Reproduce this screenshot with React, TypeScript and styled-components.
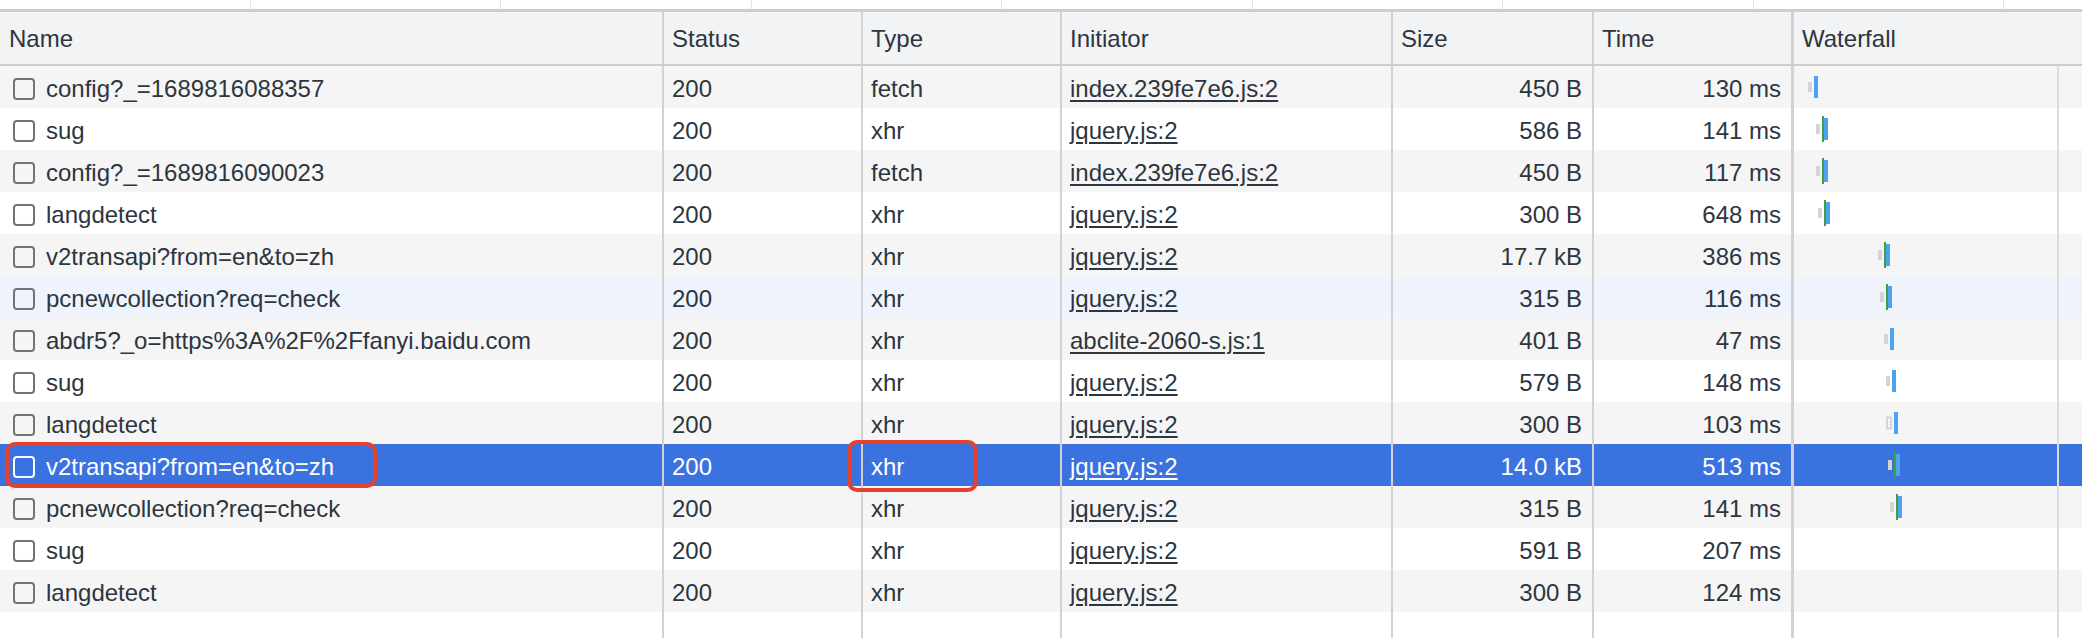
import styled, { createGlobalStyle, css } from "styled-components";

const GlobalStyle = createGlobalStyle`
  html, body {
    margin: 0;
    padding: 0;
    background: #ffffff;
  }
  body {
    font-family: "Liberation Sans", Arial, Helvetica, sans-serif;
    color: #2d3540;
  }
`;

const COLUMNS = "662px 199px 199px 331px 201px 199px 1fr";
const DIVIDER = "#d2d2d4";

type Tone = "odd" | "even" | "hover" | "selected";

type Bars = {
  gray?: number;
  hollow?: number;
  green?: number;
  blue: number;
};

type Request = {
  name: string;
  type: string;
  initiator: string;
  size: string;
  time: string;
  bars?: Bars;
  hover?: boolean;
  selected?: boolean;
};

const requests: Request[] = [
  { name: "config?_=1689816088357", type: "fetch", initiator: "index.239fe7e6.js:2", size: "450 B", time: "130 ms", bars: { gray: 14, blue: 20 } },
  { name: "sug", type: "xhr", initiator: "jquery.js:2", size: "586 B", time: "141 ms", bars: { gray: 22, green: 28, blue: 30 } },
  { name: "config?_=1689816090023", type: "fetch", initiator: "index.239fe7e6.js:2", size: "450 B", time: "117 ms", bars: { gray: 22, green: 28, blue: 30 } },
  { name: "langdetect", type: "xhr", initiator: "jquery.js:2", size: "300 B", time: "648 ms", bars: { gray: 24, green: 30, blue: 32 } },
  { name: "v2transapi?from=en&to=zh", type: "xhr", initiator: "jquery.js:2", size: "17.7 kB", time: "386 ms", bars: { gray: 84, green: 90, blue: 92 } },
  { name: "pcnewcollection?req=check", type: "xhr", initiator: "jquery.js:2", size: "315 B", time: "116 ms", bars: { gray: 86, green: 92, blue: 94 }, hover: true },
  { name: "abdr5?_o=https%3A%2F%2Ffanyi.baidu.com", type: "xhr", initiator: "abclite-2060-s.js:1", size: "401 B", time: "47 ms", bars: { gray: 90, blue: 96 } },
  { name: "sug", type: "xhr", initiator: "jquery.js:2", size: "579 B", time: "148 ms", bars: { gray: 92, blue: 98 } },
  { name: "langdetect", type: "xhr", initiator: "jquery.js:2", size: "300 B", time: "103 ms", bars: { hollow: 92, blue: 100 } },
  { name: "v2transapi?from=en&to=zh", type: "xhr", initiator: "jquery.js:2", size: "14.0 kB", time: "513 ms", bars: { gray: 94, green: 100, blue: 102 }, selected: true },
  { name: "pcnewcollection?req=check", type: "xhr", initiator: "jquery.js:2", size: "315 B", time: "141 ms", bars: { gray: 96, green: 102, blue: 104 } },
  { name: "sug", type: "xhr", initiator: "jquery.js:2", size: "591 B", time: "207 ms" },
  { name: "langdetect", type: "xhr", initiator: "jquery.js:2", size: "300 B", time: "124 ms" },
];

const Panel = styled.div`
  width: 2082px;
  height: 638px;
  overflow: hidden;
  display: flex;
  flex-direction: column;
  background: #ffffff;
  font-size: 24px;
`;

const TopStrip = styled.div`
  display: flex;
  height: 9px;
  flex: 0 0 auto;
`;

const StripCell = styled.div`
  flex: 0 0 250.5px;
  box-sizing: border-box;
  border-right: 1px solid #e4e4e6;
`;

const TopRule = styled.div`
  height: 3px;
  flex: 0 0 auto;
  background: #cbcdd1;
`;

const HeaderRow = styled.div`
  display: grid;
  grid-template-columns: ${COLUMNS};
  height: 54px;
  flex: 0 0 auto;
  box-sizing: border-box;
  background: #f1f3f4;
  border-bottom: 2px solid #cdcdcf;
`;

const HeaderCell = styled.div<{ first?: boolean; wide?: boolean }>`
  display: flex;
  align-items: center;
  padding: 2px 0 0 ${({ first }) => (first ? "9px" : "8px")};
  box-sizing: border-box;
  border-left: ${({ first, wide }) => (first ? "none" : `${wide ? 3 : 2}px solid ${DIVIDER}`)};
  white-space: nowrap;
`;

const rowTone = {
  odd: css`background: #f5f5f5;`,
  even: css`background: #ffffff;`,
  hover: css`background: #eef3fc;`,
  selected: css`
    background: #3a72df;
    color: #ffffff;
  `,
};

const Row = styled.div<{ tone: Tone }>`
  display: grid;
  grid-template-columns: ${COLUMNS};
  height: 42px;
  flex: 0 0 auto;
  ${({ tone }) => rowTone[tone]}
`;

const Filler = styled.div`
  display: grid;
  grid-template-columns: ${COLUMNS};
  flex: 1 1 auto;
  background: #ffffff;
`;

const Cell = styled.div<{ first?: boolean; right?: boolean; wide?: boolean }>`
  position: relative;
  display: flex;
  align-items: center;
  justify-content: ${({ right }) => (right ? "flex-end" : "flex-start")};
  gap: 11px;
  padding: 3px ${({ right }) => (right ? "10px" : "0")} 0 ${({ first }) => (first ? "13px" : "8px")};
  box-sizing: border-box;
  border-left: ${({ first, wide }) => (first ? "none" : `${wide ? 3 : 2}px solid ${DIVIDER}`)};
  white-space: nowrap;
  min-width: 0;
`;

const Checkbox = styled.span<{ selected?: boolean }>`
  flex: 0 0 auto;
  width: 22px;
  height: 22px;
  box-sizing: border-box;
  border: 2px solid ${({ selected }) => (selected ? "#ffffff" : "#737373")};
  border-radius: 4px;
`;

const Link = styled.span`
  text-decoration: underline;
  text-decoration-thickness: 2px;
  text-underline-offset: 3px;
`;

const WaterfallCell = styled.div`
  display: flex;
  box-sizing: border-box;
  border-left: 3px solid ${DIVIDER};
`;

const Track = styled.div`
  position: relative;
  flex: 0 0 263px;
  border-right: 2px solid #dcdcde;
`;

const Bar = styled.span<{ kind: "gray" | "hollow" | "green" | "blue" }>`
  position: absolute;
  top: 50%;
  box-sizing: border-box;
  transform: translateY(-50%);
  ${({ kind }) =>
    kind === "gray"
      ? css`width: 4px; height: 10px; background: #d4d4d4;`
      : kind === "hollow"
      ? css`width: 6px; height: 13px; border: 2px solid #d4d4d4;`
      : kind === "green"
      ? css`width: 2px; height: 26px; background: #3f9e48;`
      : css`width: 4px; height: 22px; background: #4ca4f0;`}
`;

const Callout = styled.span`
  position: absolute;
  z-index: 2;
  box-sizing: border-box;
  border: 4px solid #e5412c;
  border-radius: 10px;
  pointer-events: none;
`;

const NameCallout = styled(Callout)`
  left: 5px;
  top: -2px;
  width: 372px;
  height: 46px;
`;

const TypeCallout = styled(Callout)`
  left: -16px;
  top: -4px;
  width: 131px;
  height: 52px;
`;

const Waterfall = ({ bars }: { bars?: Bars }) => (
  <WaterfallCell>
    <Track>
      {bars?.gray !== undefined && <Bar kind="gray" style={{ left: bars.gray }} />}
      {bars?.hollow !== undefined && <Bar kind="hollow" style={{ left: bars.hollow }} />}
      {bars?.green !== undefined && <Bar kind="green" style={{ left: bars.green }} />}
      {bars && <Bar kind="blue" style={{ left: bars.blue }} />}
    </Track>
  </WaterfallCell>
);

const HEADERS = ["Status", "Type", "Initiator", "Size", "Time"];

export default function App() {
  return (
    <>
      <GlobalStyle />
      <Panel>
        <TopStrip>
          {Array.from({ length: 9 }).map((_, i) => (
            <StripCell key={i} />
          ))}
        </TopStrip>
        <TopRule />
        <HeaderRow>
          <HeaderCell first>Name</HeaderCell>
          {HEADERS.map((h) => (
            <HeaderCell key={h}>{h}</HeaderCell>
          ))}
          <HeaderCell wide>Waterfall</HeaderCell>
        </HeaderRow>
        {requests.map((r, i) => {
          const tone: Tone = r.selected ? "selected" : r.hover ? "hover" : i % 2 === 0 ? "odd" : "even";
          return (
            <Row key={i} tone={tone}>
              <Cell first>
                <Checkbox selected={r.selected} />
                {r.name}
                {r.selected && <NameCallout />}
              </Cell>
              <Cell>200</Cell>
              <Cell>
                {r.type}
                {r.selected && <TypeCallout />}
              </Cell>
              <Cell>
                <Link>{r.initiator}</Link>
              </Cell>
              <Cell right>{r.size}</Cell>
              <Cell right>{r.time}</Cell>
              <Waterfall bars={r.bars} />
            </Row>
          );
        })}
        <Filler>
          <Cell first />
          <Cell />
          <Cell />
          <Cell />
          <Cell />
          <Cell />
          <Waterfall />
        </Filler>
      </Panel>
    </>
  );
}
